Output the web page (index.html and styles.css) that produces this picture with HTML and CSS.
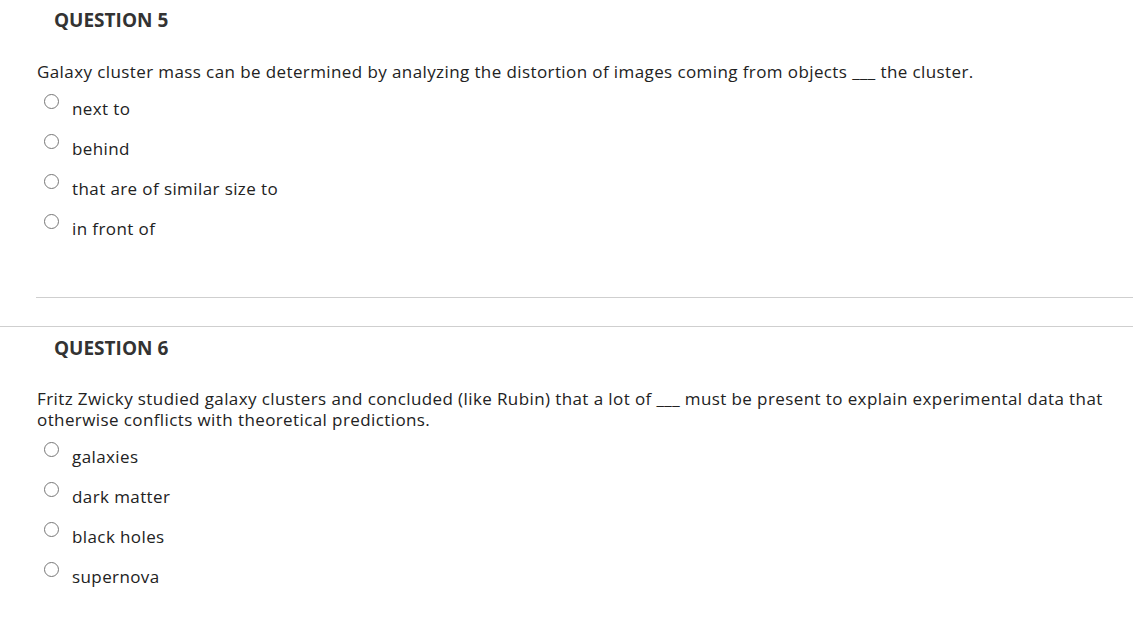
FILE: index.html
```html
<!DOCTYPE html>
<html>
<head>
<meta charset="utf-8">
<link rel="stylesheet" href="styles.css">
</head>
<body>
<div class="question q5">
  <h3 class="q-title">QUESTION 5</h3>
  <p class="q-text">Galaxy cluster mass can be determined by analyzing the distortion of images coming from objects ___ the cluster.</p>
  <ul class="options">
    <li class="option"><span class="radio"></span><span class="label">next to</span></li>
    <li class="option"><span class="radio"></span><span class="label">behind</span></li>
    <li class="option"><span class="radio"></span><span class="label">that are of similar size to</span></li>
    <li class="option"><span class="radio"></span><span class="label">in front of</span></li>
  </ul>
  <hr class="inner-rule">
</div>
<hr class="outer-rule">
<div class="question q6">
  <h3 class="q-title">QUESTION 6</h3>
  <p class="q-text">Fritz Zwicky studied galaxy clusters and concluded (like Rubin) that a lot of ___ must be present to explain experimental data that otherwise conflicts with theoretical predictions.</p>
  <ul class="options">
    <li class="option"><span class="radio"></span><span class="label">galaxies</span></li>
    <li class="option"><span class="radio"></span><span class="label">dark matter</span></li>
    <li class="option"><span class="radio"></span><span class="label">black holes</span></li>
    <li class="option"><span class="radio"></span><span class="label">supernova</span></li>
  </ul>
</div>
</body>
</html>
```
FILE: styles.css
```css
html, body {
  margin: 0;
  padding: 0;
  background: #fff;
}
body {
  font-family: "Open Sans", "Liberation Sans", sans-serif;
  color: #222;
  font-size: 17px;
  letter-spacing: 0.4px;
}
.question {
  padding-top: 8px;
}
.q6 {
  padding-top: 9px;
}
.q-title {
  margin: 0 0 0 54px;
  font-size: 19px;
  font-weight: 700;
  line-height: 24px;
  letter-spacing: 0;
  color: #333;
}
.q-text {
  margin: 29px 22px 0 37px;
  line-height: 21px;
}
.q6 .q-text {
  margin-top: 28px;
}
.options {
  list-style: none;
  margin: 7px 0 0 44px;
  padding: 0;
}
.option {
  display: flex;
  align-items: flex-start;
  height: 40px;
}
.radio {
  box-sizing: border-box;
  width: 15px;
  height: 15px;
  border: 1px solid #777;
  border-radius: 50%;
  margin-top: 5px;
  flex: none;
}
.label {
  margin-left: 13px;
  line-height: 40px;
}
.inner-rule {
  margin: 48px 0 0 36px;
  border: 0;
  border-top: 1px solid #cfcfcf;
  height: 0;
}
.outer-rule {
  margin: 28px 0 0 0;
  border: 0;
  border-top: 1px solid #cfcfcf;
  height: 0;
}
```
